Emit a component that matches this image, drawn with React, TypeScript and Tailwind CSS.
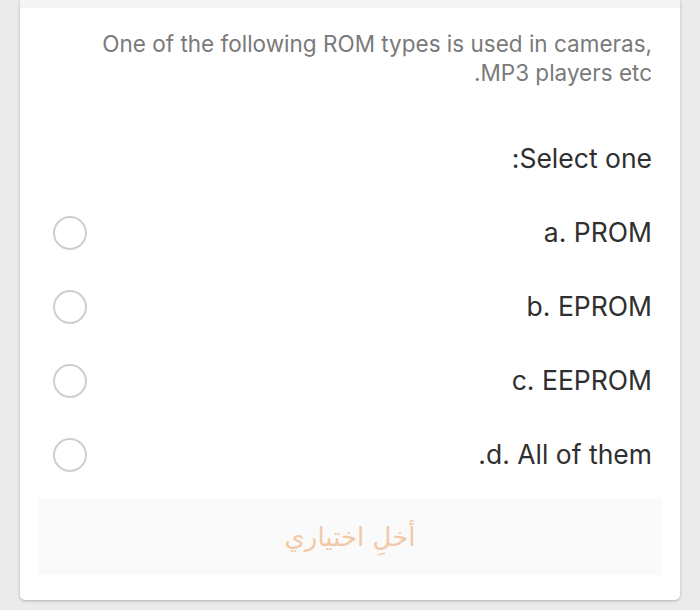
import React from "react";

const options = ["a. PROM", "b. EPROM", "c. EEPROM", "d. All of them."];

const Radio: React.FC = () => (
  <span className="block w-[34px] h-[34px] rounded-full border-[2px] border-[#cfcfcf] bg-white" />
);

const App: React.FC = () => {
  return (
    <div
      className="w-[700px] h-[610px] bg-[#ebebeb] overflow-hidden"
      style={{ fontFamily: "Inter, 'DejaVu Sans', sans-serif" }}
    >
      <div
        dir="rtl"
        className="ml-[20px] w-[660px] h-[600px] bg-white rounded-b-[5px] shadow-[0_1px_3px_rgba(0,0,0,0.25)] flex flex-col"
      >
        <div className="h-[8px] bg-[#f4f4f4]" />
        <p className="pr-[28px] pl-[30px] pt-[21px] text-[22.5px] leading-[29px] text-[#7a7a7a]">
          {"One of the following ROM types is used in cameras,\u200E"}
          <br />
          MP3 players etc.
        </p>
        <p className="pr-[28px] mt-[54px] text-[26.5px] leading-[34px] text-[#2f2f2f]">
          Select one:
        </p>
        <div className="mt-[21px] flex flex-col">
          {options.map((o) => (
            <div key={o} className="h-[74px] flex items-center justify-between pr-[28px] pl-[33px]">
              <span className="text-[26.5px] text-[#2f2f2f]">{o}</span>
              <Radio />
            </div>
          ))}
        </div>
        <div className="mx-[18px] mt-[7px] h-[76px] bg-[#fafafa] flex items-center justify-center">
          <span
            className="text-[26px] text-[#f1c9a9]"
            style={{ fontFamily: "'DejaVu Sans', 'Noto Sans', sans-serif" }}
          >
            أخلِ اختياري
          </span>
        </div>
      </div>
    </div>
  );
};

export default App;
